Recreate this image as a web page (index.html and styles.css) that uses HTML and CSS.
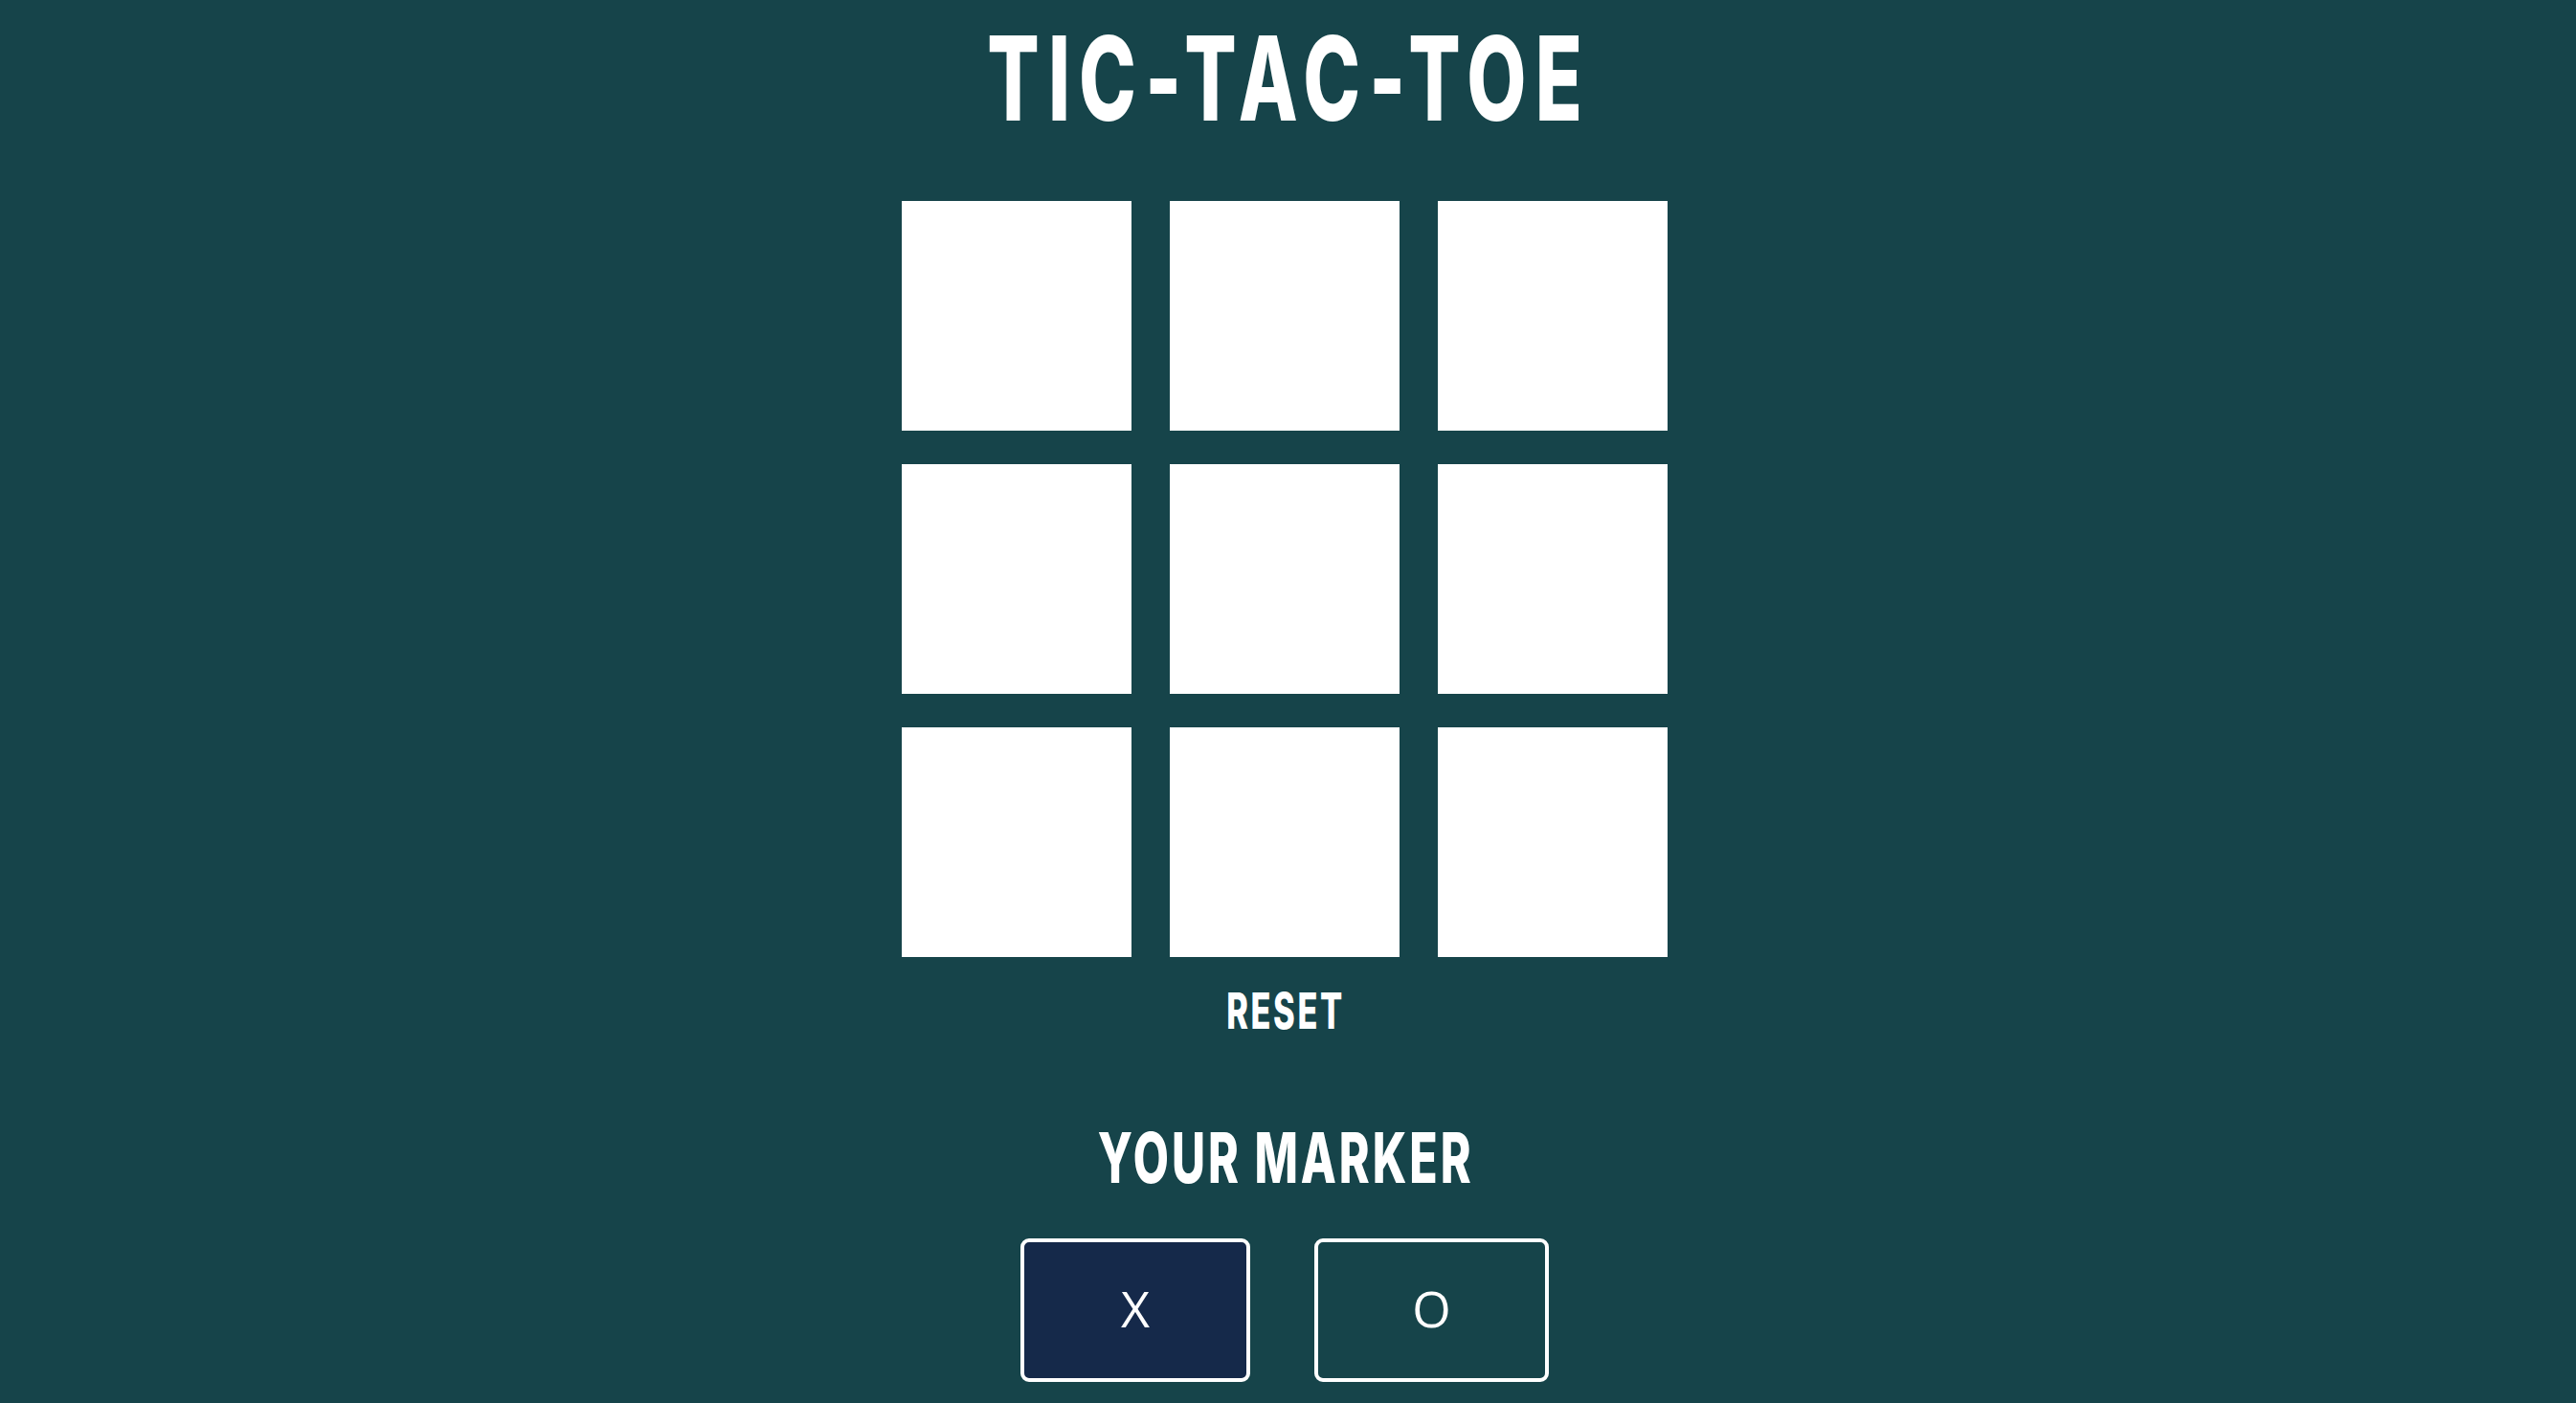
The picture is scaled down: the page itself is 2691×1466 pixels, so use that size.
FILE: index.html
```html
<!DOCTYPE html>
<html lang="en">
<head>
<meta charset="utf-8">
<title>Tic-Tac-Toe</title>
<link rel="stylesheet" href="styles.css">
</head>
<body>
<main class="game">
  <h1 class="title">TIC-TAC-TOE</h1>
  <div class="board">
    <div class="cell"></div>
    <div class="cell"></div>
    <div class="cell"></div>
    <div class="cell"></div>
    <div class="cell"></div>
    <div class="cell"></div>
    <div class="cell"></div>
    <div class="cell"></div>
    <div class="cell"></div>
  </div>
  <button class="reset">RESET</button>
  <h2 class="marker-title">YOUR MARKER</h2>
  <div class="markers">
    <button class="marker marker-x is-active">X</button>
    <button class="marker marker-o">O</button>
  </div>
</main>
</body>
</html>
```

FILE: styles.css
```css
html, body {
  margin: 0;
  padding: 0;
  background: #16444a;
}

.game {
  display: flex;
  flex-direction: column;
  align-items: center;
  padding-right: 7px;
  color: #ffffff;
}

.title,
.reset,
.marker-title {
  font-family: "Inter", "Roboto", sans-serif;
  font-weight: 800;
  line-height: 1;
  color: #ffffff;
  margin: 0;
  transform: scaleX(0.66);
}

.title {
  font-size: 122px;
  margin-top: 21px;
  letter-spacing: 14px;
  padding-left: 14px;
}

.board {
  margin-top: 67px;
  display: grid;
  grid-template-columns: repeat(3, 240px);
  grid-auto-rows: 240px;
  column-gap: 40px;
  row-gap: 35px;
}

.cell {
  background: #ffffff;
}

.reset {
  margin-top: 31px;
  font-size: 52px;
  letter-spacing: 4px;
  background: none;
  border: none;
  padding: 0 0 0 4px;
  cursor: pointer;
}

.marker-title {
  margin-top: 90px;
  font-size: 73px;
  letter-spacing: 4.5px;
  padding-left: 4.5px;
}

.markers {
  margin-top: 48px;
  display: flex;
  gap: 67px;
}

.marker {
  height: 150px;
  width: 240px;
  box-sizing: border-box;
  border: 4px solid #ffffff;
  border-radius: 9px;
  background: #16444a;
  color: #ffffff;
  font-family: "Open Sans", "Noto Sans", sans-serif;
  font-weight: 500;
  font-size: 52px;
  display: flex;
  align-items: center;
  justify-content: center;
  padding: 0 0 6px 0;
}

.marker-o {
  width: 245px;
}

.marker.is-active {
  background: #15294a;
}
```
